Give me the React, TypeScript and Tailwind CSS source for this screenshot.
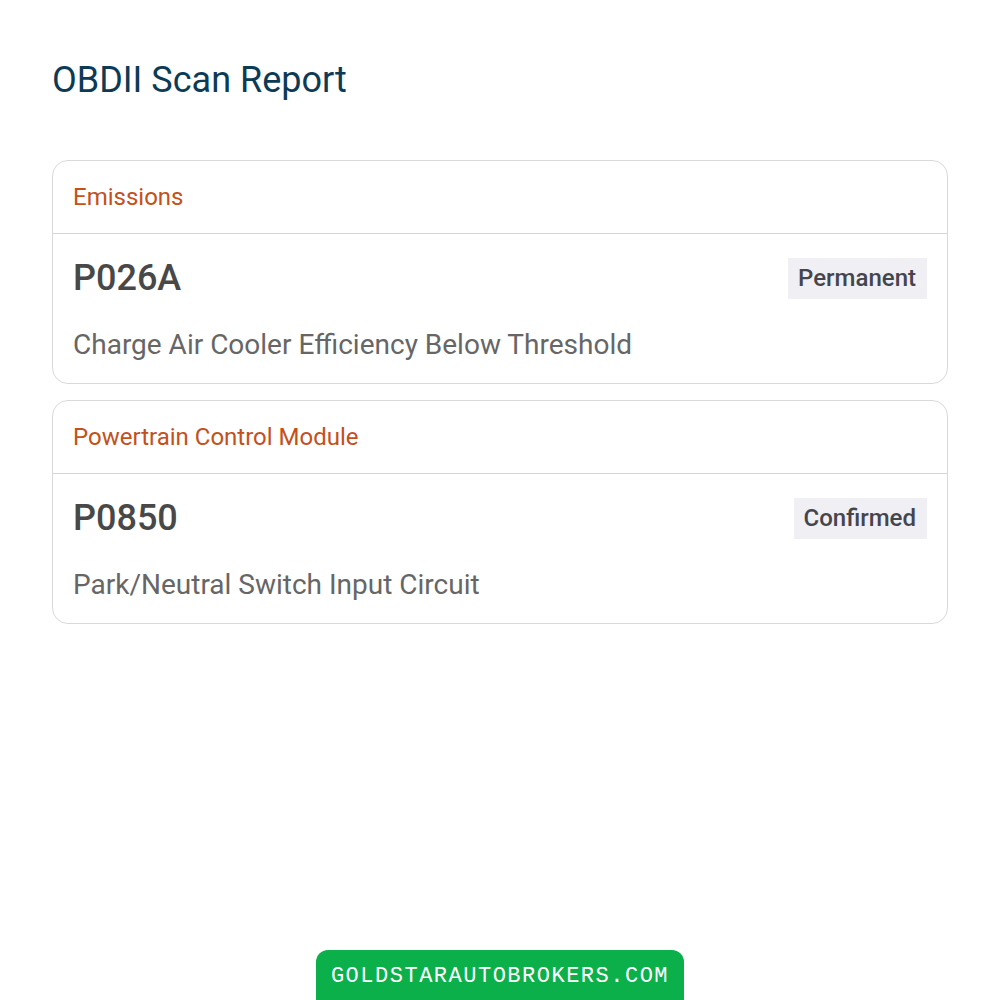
import React from "react";

type Code = { section: string; code: string; status: string; desc: string };

const codes: Code[] = [
  { section: "Emissions", code: "P026A", status: "Permanent", desc: "Charge Air Cooler Efficiency Below Threshold" },
  { section: "Powertrain Control Module", code: "P0850", status: "Confirmed", desc: "Park/Neutral Switch Input Circuit" },
];

function CodeCard({ item }: { item: Code }) {
  return (
    <div className="rounded-[16px] border border-[#d9d9d9] bg-white">
      <div className="flex h-[73px] items-center border-b border-[#d4d4d4] px-5 text-[24px] text-[#c4501a]">
        {item.section}
      </div>
      <div className="px-5 pt-[23px] pb-[21px]">
        <div className="flex items-center justify-between">
          <div className="text-[36px] font-medium leading-[42px] text-[#484848]">{item.code}</div>
          <div className="bg-[#f0f0f4] pl-[10px] pr-[11px] py-[7px] text-[24px] font-medium leading-[27px] text-[#45454d]">
            {item.status}
          </div>
        </div>
        <div className="mt-[29px] text-[28px] leading-[34px] text-[#666666]">{item.desc}</div>
      </div>
    </div>
  );
}

export default function App() {
  return (
    <div
      className="relative min-h-[1000px] bg-white px-[52px] pt-[56px]"
      style={{ fontFamily: "Roboto, 'Noto Sans', sans-serif" }}
    >
      <h1 className="text-[36px] leading-[48px] text-[#0d3b55]">OBDII Scan Report</h1>
      <div className="mt-[56px] flex flex-col gap-[16px]">
        {codes.map((c) => (
          <CodeCard key={c.code} item={c} />
        ))}
      </div>
      <div className="absolute bottom-0 left-[316px] flex h-[50px] w-[368px] items-start justify-center rounded-t-[12px] bg-[#0bb04b] pt-[14px]">
        <span
          className="text-[22px] leading-[26px] tracking-[1.5px] text-white"
          style={{ fontFamily: "'Liberation Mono', monospace" }}
        >
          GOLDSTARAUTOBROKERS.COM
        </span>
      </div>
    </div>
  );
}
